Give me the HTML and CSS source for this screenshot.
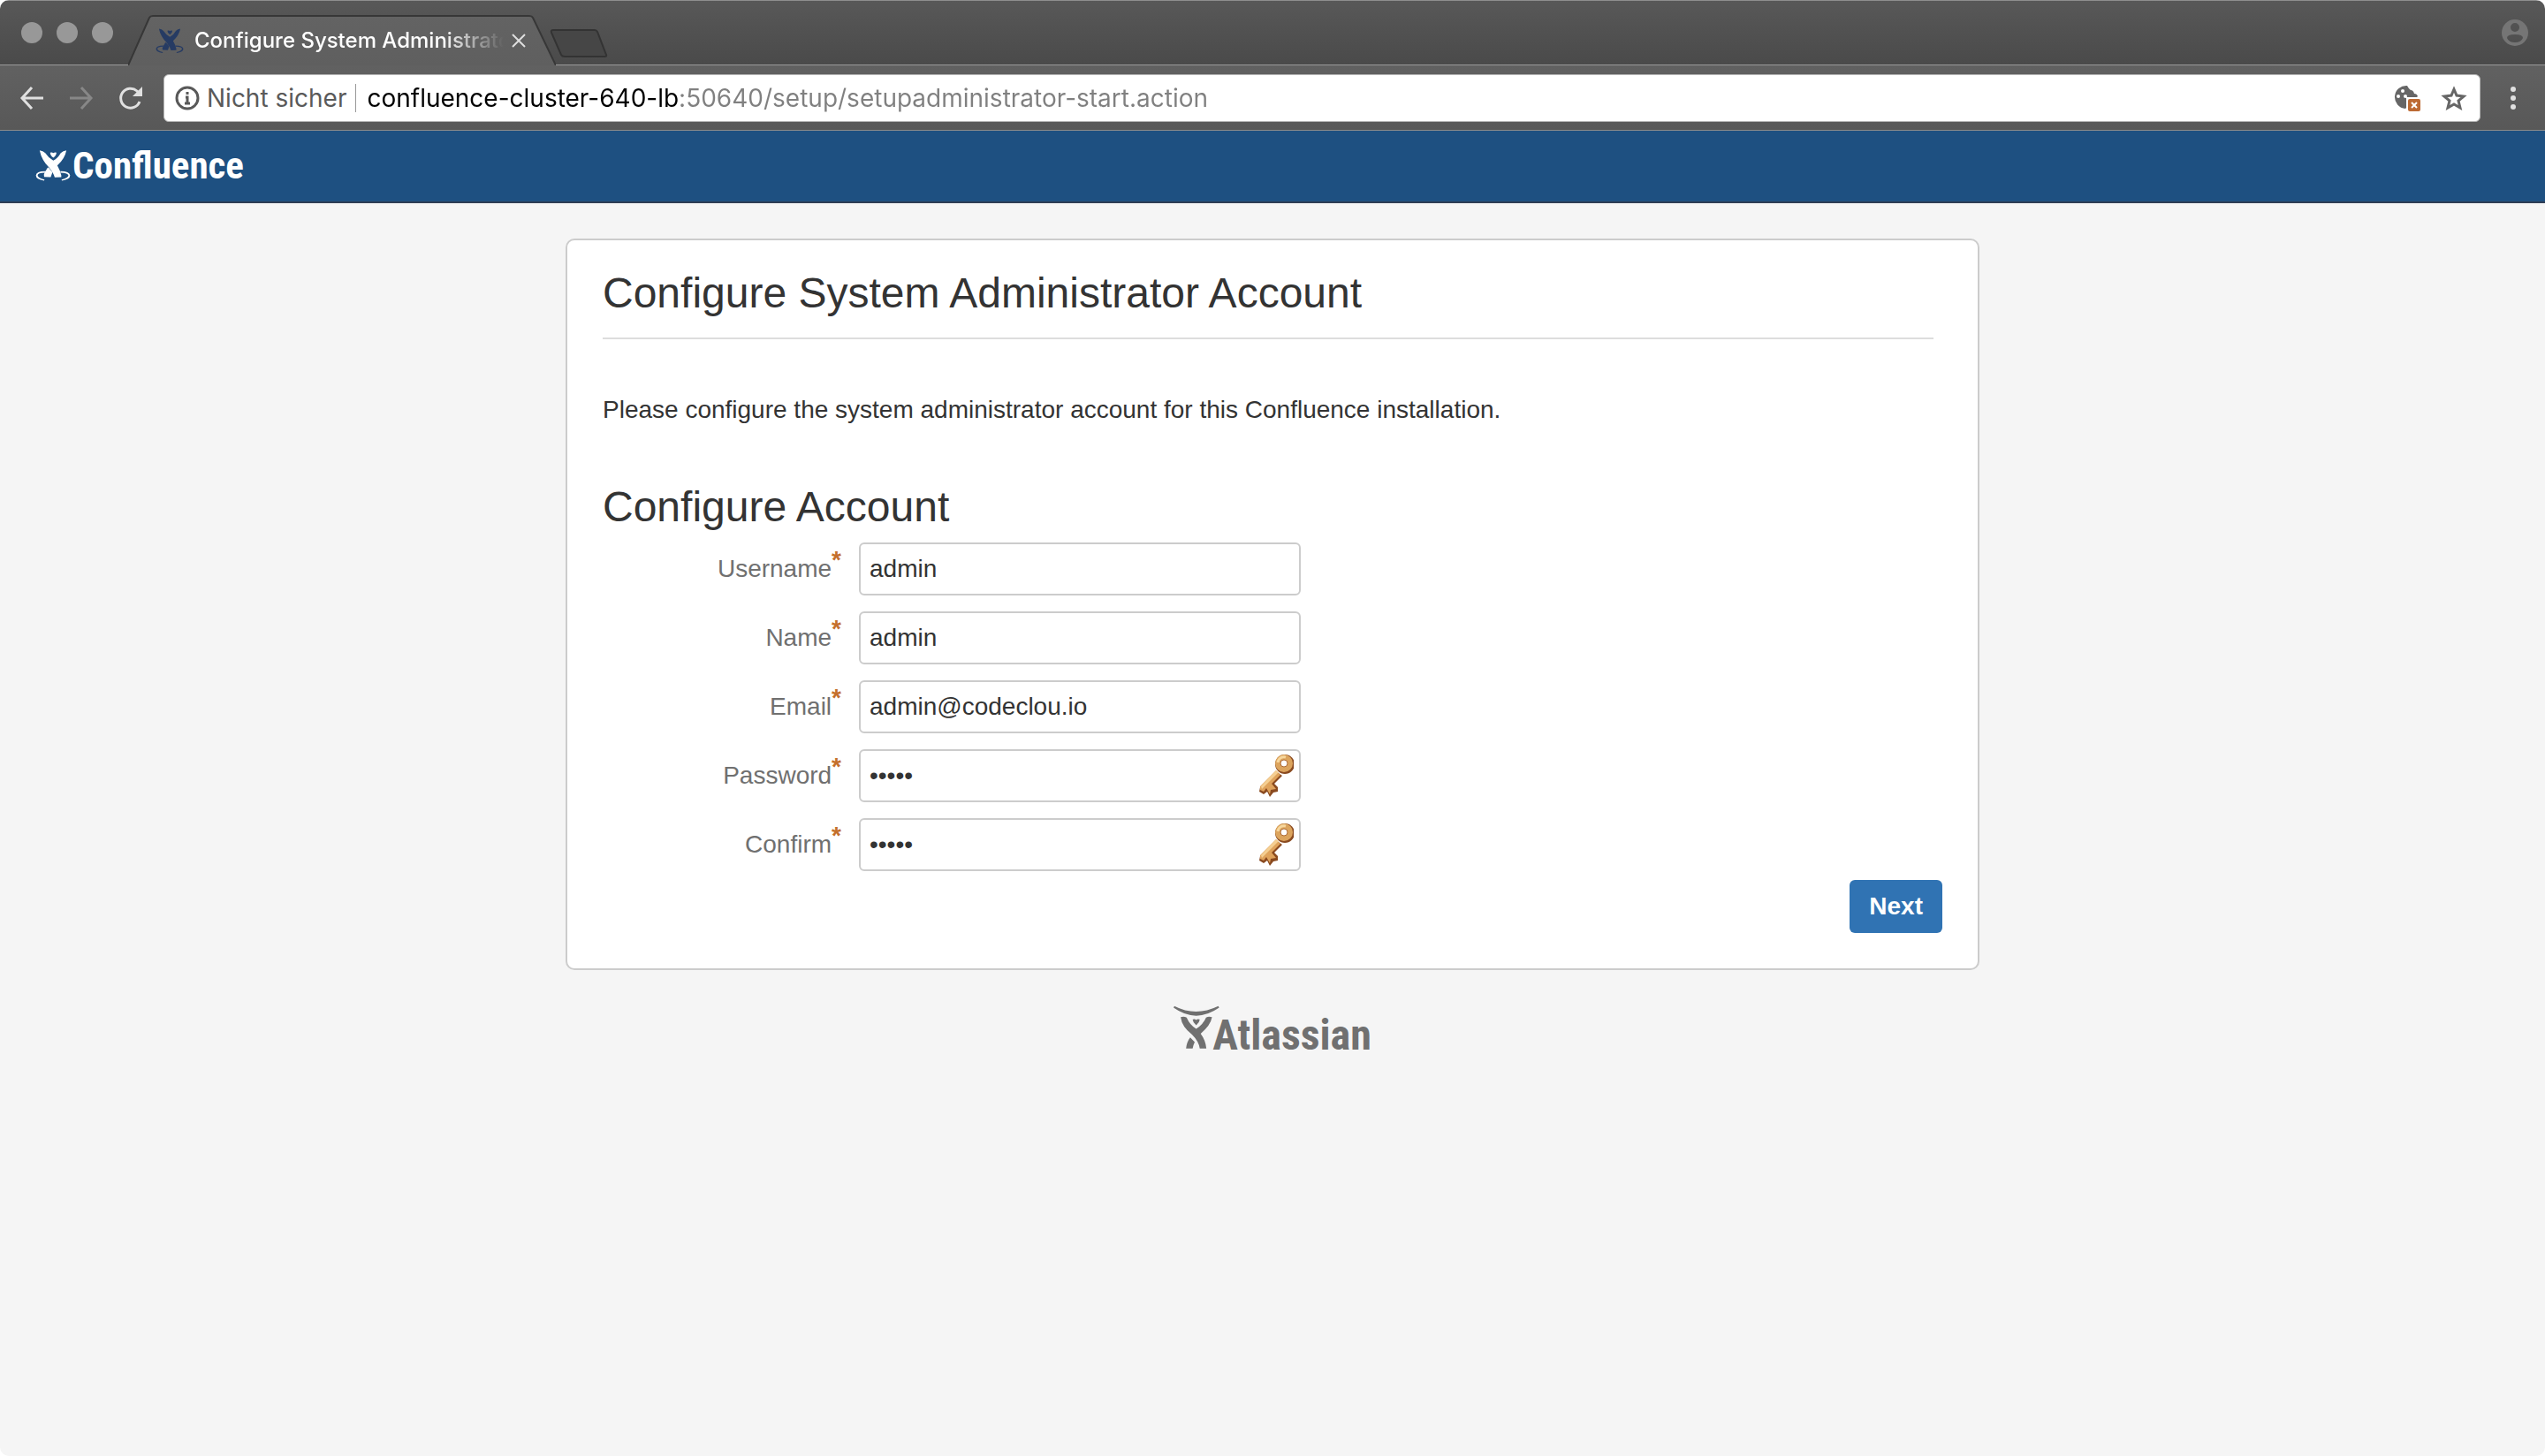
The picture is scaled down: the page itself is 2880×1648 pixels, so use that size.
FILE: index.html
```html
<!DOCTYPE html>
<html lang="en">
<head>
<meta charset="utf-8">
<title>Configure System Administrator Account</title>
<link rel="stylesheet" href="styles.css">
</head>
<body>
<svg class="defs" aria-hidden="true">
  <symbol id="figure" viewBox="58 64 124 112">
    <path d="M73 68Q85 70 93 77Q105 95 121 104Q137 95 147 77Q155 70 167 68Q161 98 135 121Q145 138 149 156L149 162L126 163Q122 148 106 128Q80 102 73 68Z"/>
    <path d="M110 76Q116 74 121 77Q127 74 132 76Q132 86 121 94Q110 86 110 76Z"/>
    <path d="M104 128L118 145L112 162L89 161L88 153Q92 140 96 137Q100 128 104 128Z"/>
    <path d="M92 146Q66 146 66 156Q66 165 90 170L89 174Q60 170 60 156Q61 141 92 141Z"/>
    <path d="M146 146Q174 147 174 156Q174 165 150 170L151 174Q180 170 180 156Q178 141 146 141Z"/>
  </symbol>
  <symbol id="key" viewBox="0 0 40 50">
    <path d="M20 20L2 38L1 43L6 46L10 43L13 49L17 44L22 43L22 38L18 34L27 25Z" fill="#8a4a20"/>
    <circle cx="30" cy="12" r="11" fill="#8a4a20"/>
    <path d="M20 19L2 37L2 41L6 43L9 39L13 46L14 41L20 40L15 34L25 24Z" fill="#dfa35c"/>
    <path d="M20 19L3 37L4 40L23 21Z" fill="#f5cf92"/>
    <circle cx="29" cy="11" r="7" fill="none" stroke="#dca45d" stroke-width="6"/>
    <path d="M22 10A7 7 0 0 1 31 4" fill="none" stroke="#f7d79d" stroke-width="3"/>
    <circle cx="29" cy="11" r="4" fill="#fff" stroke="#b06c34"/>
  </symbol>
</svg>

<div class="window">
  <header class="tabstrip">
    <div class="lights"><i></i><i></i><i></i></div>
    <div class="tab">
      <svg class="tab-shape" viewBox="0 0 484 57" preserveAspectRatio="none" aria-hidden="true">
        <defs><linearGradient id="tabfill" x1="0" y1="0" x2="0" y2="1"><stop offset="0" stop-color="#636363"/><stop offset="1" stop-color="#5f5f5f"/></linearGradient></defs>
        <path d="M0 57L24 3Q25 1 28 1H454Q457 1 458 3L484 57Z" fill="url(#tabfill)"/>
        <path d="M0 57L24 3Q25 1 28 1H454Q457 1 458 3L484 57" fill="none" stroke="#373737" stroke-width="2"/>
      </svg>
      <svg class="favicon" aria-hidden="true"><use href="#figure"/></svg>
      <span class="tab-title">Configure System Administrator</span>
      <button class="tab-close" aria-label="Close tab"><svg viewBox="0 0 16 16"><path d="M1 1L15 15M15 1L1 15" stroke="#dedede" stroke-width="2"/></svg></button>
    </div>
    <button class="new-tab" aria-label="New tab"><svg viewBox="0 0 66 32"><path d="M4 1H51Q53 1 54 3L64 29Q65 31 62 31H17Q14 31 13 29L2 4Q1 1 4 1Z" fill="#464646" stroke="#333" stroke-width="2"/></svg></button>
    <button class="profile" aria-label="Profile"><svg viewBox="0 0 30 30"><path fill="#757575" fill-rule="evenodd" d="M15 0A15 15 0 1 1 15 30A15 15 0 1 1 15 0ZM15 4A5 5 0 1 0 15 14A5 5 0 1 0 15 4ZM15 17Q6 17 6 21Q8 26 15 26Q22 26 24 21Q24 17 15 17Z"/></svg></button>
  </header>

  <nav class="toolbar">
    <div class="nav-buttons">
      <button aria-label="Back"><svg viewBox="0 0 28 28"><path d="M14 2L3 14L14 26M3 14H27" fill="none" stroke="#e0e0e0" stroke-width="3"/></svg></button>
      <button aria-label="Forward"><svg viewBox="0 0 28 28"><path d="M14 2L25 14L14 26M25 14H1" fill="none" stroke="#878787" stroke-width="3"/></svg></button>
      <button aria-label="Reload"><svg viewBox="0 0 28 28"><path d="M24 18A11 11 0 1 1 21 6L24 9" fill="none" stroke="#e0e0e0" stroke-width="3"/><path d="M27 1V12H16Z" fill="#e0e0e0"/></svg></button>
    </div>
    <div class="address">
      <svg class="info" viewBox="0 0 28 28" aria-hidden="true"><circle cx="14" cy="14" r="12" fill="none" stroke="#595959" stroke-width="3"/><path d="M14 7V10M12 13H14V20M11 20H17" fill="none" stroke="#595959" stroke-width="3"/></svg>
      <span class="security">Nicht sicher</span>
      <input class="url" type="text" aria-label="Address" value="confluence-cluster-640-lb:50640/setup/setupadministrator-start.action">
      <svg class="cookie" viewBox="0 0 30 30" aria-hidden="true">
        <path d="M15 1A13 13 0 1 0 13 27L27 13Q26 10 23 10Q22 6 19 6Q17 5 15 1Z" fill="#666"/>
        <g fill="#fff"><circle cx="10" cy="7" r="2"/><circle cx="5" cy="13" r="2"/><circle cx="13" cy="13" r="2"/><path d="M14 14H30V30H14Z"/></g>
        <rect x="16" y="16" width="14" height="14" rx="2" fill="#bd6a33"/><path d="M20 20L26 26M26 20L20 26" stroke="#fff" stroke-width="2"/>
      </svg>
      <svg class="star" viewBox="0 0 30 28" aria-hidden="true"><path d="M15 4L18 11L26 12L20 17L22 25L15 21L8 25L10 17L4 12L12 11Z" fill="none" stroke="#666" stroke-width="3"/></svg>
    </div>
    <button class="menu" aria-label="Menu"><i></i><i></i><i></i></button>
  </nav>

  <div class="appbar">
    <a class="logo" href="#"><svg class="logo-figure" aria-hidden="true"><use href="#figure"/></svg><span>Confluence</span></a>
  </div>

  <main class="page">
    <form class="card">
      <h1>Configure System Administrator Account</h1>
      <p>Please configure the system administrator account for this Confluence installation.</p>
      <h2>Configure Account</h2>
      <div class="fields">
        <div class="field"><label for="username">Username<span class="req">*</span></label><div class="control"><input id="username" type="text" value="admin"></div></div>
        <div class="field"><label for="name">Name<span class="req">*</span></label><div class="control"><input id="name" type="text" value="admin"></div></div>
        <div class="field"><label for="email">Email<span class="req">*</span></label><div class="control"><input id="email" type="text" value="admin@codeclou.io"></div></div>
        <div class="field"><label for="password">Password<span class="req">*</span></label><div class="control"><input id="password" type="password" value="admin"><svg class="key" aria-hidden="true"><use href="#key"/></svg></div></div>
        <div class="field"><label for="confirm">Confirm<span class="req">*</span></label><div class="control"><input id="confirm" type="password" value="admin"><svg class="key" aria-hidden="true"><use href="#key"/></svg></div></div>
      </div>
      <div class="actions"><button class="next" type="button">Next</button></div>
    </form>
    <footer>
      <a class="atlassian" href="#">
        <svg viewBox="60 58 154 147" aria-hidden="true">
          <path d="M63 60Q134 97 210 60L213 65Q174 92 136 92Q98 92 60 65Z"/>
          <path d="M84 97Q94 93 104 98Q114 122 136 136Q160 120 169 98Q178 93 189 97Q184 125 151 152Q168 175 170 202H148Q145 178 122 155Q88 130 84 97Z"/>
          <path d="M124 105Q130 102 136 106Q142 102 148 105Q147 115 136 124Q125 115 124 105Z"/>
          <path d="M116 165L131 180Q126 190 124 202H102Q104 180 116 165Z"/>
        </svg><span>Atlassian</span>
      </a>
    </footer>
  </main>
</div>
</body>
</html>
```
FILE: styles.css
```css
* { box-sizing: border-box; }

body {
  margin: 0;
  background: #fff;
  color: #333;
  font: 28px/40px "Liberation Sans", Arial, sans-serif;
}

button {
  padding: 0;
  border: 0;
  background: none;
  font: inherit;
}

svg { display: block; }
.defs { position: absolute; width: 0; height: 0; }

.window {
  display: flex;
  flex-direction: column;
  min-height: 100vh;
  overflow: hidden;
  border-radius: 10px;
  background: #f5f5f5;
}

/* Browser frame */
.tabstrip {
  display: flex;
  align-items: flex-end;
  height: 74px;
  padding: 0 19px 0 24px;
  border-top: 1px solid #8e8e8e;
  border-bottom: 1px solid #999;
  background: linear-gradient(#585858, #4a4a4a);
  font-family: Inter, Roboto, sans-serif;
}

.lights { display: flex; gap: 16px; align-self: center; }
.lights i { width: 24px; height: 24px; border-radius: 50%; background: #989898; }

.tab {
  position: relative;
  display: flex;
  align-items: center;
  width: 484px;
  height: 57px;
  margin: 0 -7px -1px 17px;
  padding: 0 34px 0 31px;
}

.tab-shape { position: absolute; inset: 0; width: 100%; height: 100%; }
.favicon { position: relative; width: 32px; height: 30px; fill: #263b63; }

.tab-title {
  position: relative;
  flex: 1;
  margin-left: 12px;
  overflow: hidden;
  color: #fff;
  font-size: 24px;
  font-weight: 500;
  line-height: 32px;
  white-space: nowrap;
  -webkit-mask-image: linear-gradient(90deg, #000 80%, transparent);
  mask-image: linear-gradient(90deg, #000 80%, transparent);
}

.tab-close { position: relative; width: 16px; margin-left: 9px; }
.new-tab { width: 66px; margin-bottom: 8px; }
.profile { width: 30px; margin-left: auto; align-self: center; }

.toolbar {
  display: flex;
  align-items: center;
  height: 74px;
  padding: 0 33px 0 22px;
  border-bottom: 1px solid #8a8a8a;
  background: linear-gradient(#616161, #585858);
}

.nav-buttons { display: flex; gap: 28px; }
.nav-buttons button { width: 28px; }

.address {
  display: flex;
  flex: 1;
  align-items: center;
  height: 54px;
  margin: 0 34px 0 23px;
  padding: 0 14px 0 12px;
  border: 1px solid #b5b5b5;
  border-radius: 6px;
  background: #fff;
  font: 28px/40px Inter, Roboto, sans-serif;
}

.info { width: 28px; }
.security { padding: 0 10px 0 8px; color: #5a5a5a; white-space: nowrap; }

/* The host name is black, the rest of the address grey */
.url {
  flex: 1;
  min-width: 0;
  height: 32px;
  padding: 0 0 0 12px;
  border: 0;
  border-left: 1px solid #999;
  background: linear-gradient(90deg, #000 364px, #808080 364px) text;
  color: #808080;
  font: inherit;
  -webkit-text-fill-color: transparent;
}

.cookie { width: 30px; }
.star { width: 30px; margin-left: 23px; }
.menu { display: flex; flex-direction: column; gap: 4px; }
.menu i { width: 6px; height: 6px; border-radius: 50%; background: #e0e0e0; }

/* Confluence */
.appbar {
  display: flex;
  align-items: center;
  height: 82px;
  padding: 0 40px 2px;
  border-bottom: 2px solid #2e3d54;
  background: #1e5081;
}

.logo, .atlassian {
  display: flex;
  align-items: center;
  font-family: "Liberation Sans Narrow", "Roboto Condensed", Roboto, sans-serif;
  font-weight: bold;
  text-decoration: none;
}

.logo { gap: 2px; color: #fff; font-size: 43px; line-height: 48px; }
.logo-figure { width: 40px; height: 38px; fill: currentColor; }

.page { padding: 40px; }

.card {
  max-width: 1600px;
  margin: 0 auto;
  padding: 32px 40px 40px;
  border: 2px solid #ccc;
  border-radius: 10px;
  background: #fff;
}

h1, h2 { margin: 0; font-size: 48px; font-weight: normal; line-height: 56px; }
h1 { margin-right: 10px; padding-bottom: 22px; border-bottom: 2px solid #ddd; }
p { margin: 60px 0 62px; }

.fields { display: flex; flex-direction: column; gap: 18px; margin-top: 12px; }
.field { display: flex; gap: 20px; }

.field label {
  display: flex;
  justify-content: flex-end;
  width: 270px;
  color: #707070;
  line-height: 60px;
}

.req { color: #c4702c; font-weight: bold; line-height: 40px; }
.control { position: relative; width: 500px; }

.control input {
  display: block;
  width: 100%;
  height: 60px;
  padding: 0 10px;
  border: 2px solid #ccc;
  border-radius: 6px;
  background: #fff;
  color: #333;
  font: inherit;
}

.key { position: absolute; top: 5px; right: 8px; width: 40px; height: 50px; }

.actions { display: flex; justify-content: flex-end; margin-top: 10px; }

.next {
  height: 60px;
  padding: 0 22px;
  border-radius: 6px;
  background: #3073b3;
  color: #fff;
  font-weight: bold;
}

footer { display: flex; justify-content: center; margin-top: 40px; }
.atlassian { align-items: baseline; color: #707070; font-size: 48px; line-height: 56px; }
.atlassian svg { width: 52px; height: 50px; margin-right: -8px; fill: currentColor; }
```
